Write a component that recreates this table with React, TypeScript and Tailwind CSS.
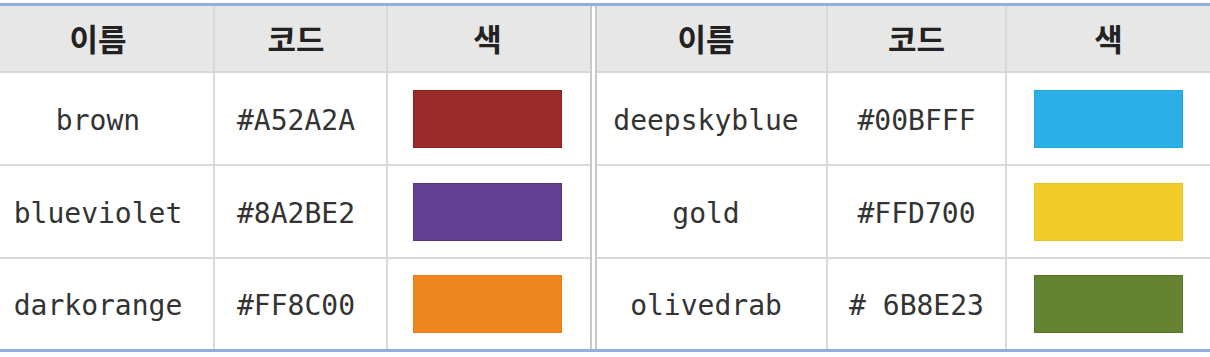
type Row = { name: string; code: string; swatch: string };

const leftRows: Row[] = [
  { name: "brown", code: "#A52A2A", swatch: "bg-[#9b2a2a] border-[#8a2222]" },
  { name: "blueviolet", code: "#8A2BE2", swatch: "bg-[#654195] border-[#55338a]" },
  { name: "darkorange", code: "#FF8C00", swatch: "bg-[#ee861e] border-[#e57d12]" },
];

const rightRows: Row[] = [
  { name: "deepskyblue", code: "#00BFFF", swatch: "bg-[#2ab0e6] border-[#24a6dc]" },
  { name: "gold", code: "#FFD700", swatch: "bg-[#f2cd2a] border-[#ecc21c]" },
  { name: "olivedrab", code: "# 6B8E23", swatch: "bg-[#658431] border-[#587529]" },
];

const mono = { fontFamily: '"DejaVu Sans Mono", "Liberation Mono", monospace' };
const kr = { fontFamily: '"Noto Sans CJK KR", "Noto Sans", sans-serif' };

// pads nudge each column's text the way the original sits, a bit left of centre
const ColorTable = ({ rows, cols, pads }: { rows: Row[]; cols: string; pads: string[] }) => {
  return (
    <div className={`grid ${cols}`}>
      {["이름", "코드", "색"].map((h, i) => (
        <div
          key={h}
          style={kr}
          className={`flex h-[67px] items-center justify-center border-b-2 border-[#d8d8d8] bg-[#e6e7e6] text-[31px] font-bold text-[#222] ${
            i < 2 ? "border-r-2" : ""
          } ${pads[i]}`}
        >
          {h}
        </div>
      ))}
      {rows.map((r, idx) => {
        const last = idx === rows.length - 1;
        const rowCls = last ? "h-[90px]" : "h-[93px] border-b-2";
        return (
          <div key={r.name} className="contents">
            <div
              style={mono}
              className={`flex items-center justify-center border-r-2 border-[#dadada] pt-[4px] text-[28px] text-[#333] ${rowCls} ${pads[0]}`}
            >
              {r.name}
            </div>
            <div
              style={mono}
              className={`flex items-center justify-center border-r-2 border-[#dadada] pt-[4px] text-[28px] text-[#333] ${rowCls} ${pads[1]}`}
            >
              {r.code}
            </div>
            <div className={`flex items-center justify-center border-[#dadada] ${rowCls} ${pads[2]}`}>
              <div className={`h-[58px] w-[149px] border ${r.swatch}`} />
            </div>
          </div>
        );
      })}
    </div>
  );
};

export default function App() {
  return (
    <div className="h-[357px] w-[1210px] overflow-hidden bg-white pt-[3px]">
      <div className="flex border-y-[3px] border-[#8fb0de]">
        <div className="w-[590px]">
          <ColorTable
            rows={leftRows}
            cols="grid-cols-[215px_173px_202px]"
            pads={["pr-[17px]", "pr-[9px]", "pr-[3px]"]}
          />
        </div>
        <div className="w-[7px] border-x-2 border-[#c8c8c8] bg-white" />
        <div className="w-[613px]">
          <ColorTable
            rows={rightRows}
            cols="grid-cols-[231px_179px_203px]"
            pads={["pr-[11px]", "", ""]}
          />
        </div>
      </div>
    </div>
  );
}
